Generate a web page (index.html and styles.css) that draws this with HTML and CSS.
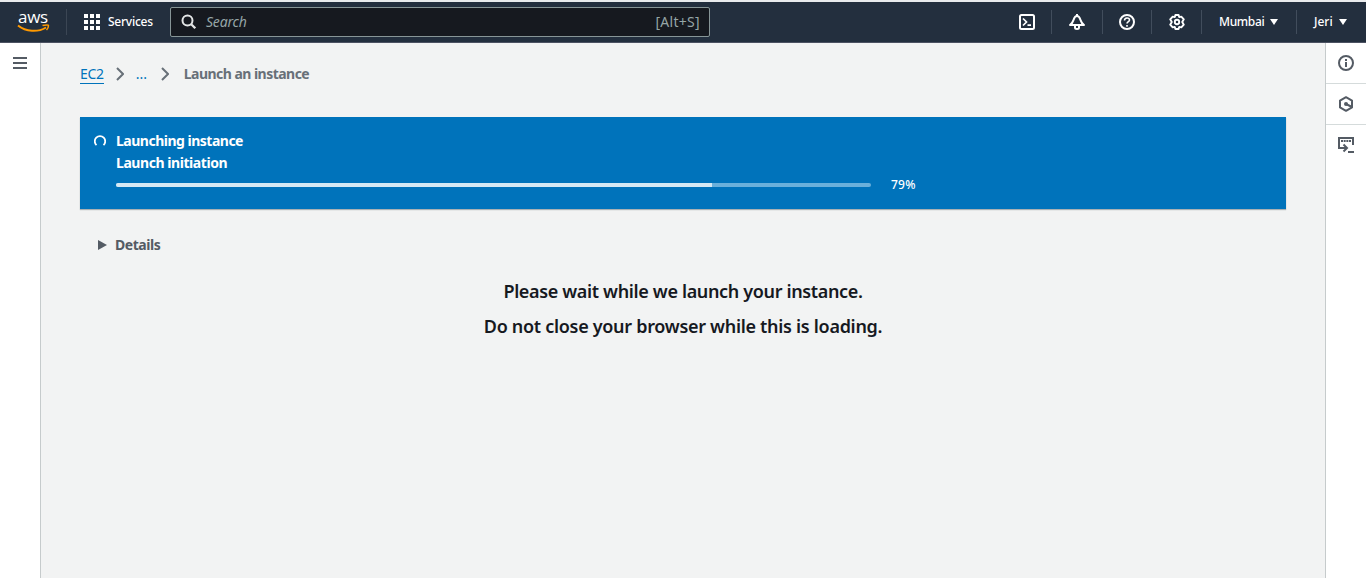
FILE: index.html
```html
<!DOCTYPE html>
<html lang="en">
<head>
<meta charset="utf-8">
<title>Launch an instance | EC2</title>
<link rel="stylesheet" href="styles.css">
</head>
<body>
<header class="topnav">
  <a class="logo"><span class="logo-text">aws</span>
    <svg class="smile" width="33" height="9" viewBox="0 0 33 9" fill="none" stroke="#ff9900"><path d="M1 1.500C9 8 21 8.500 29 3.500" stroke-width="2"/><path d="M25.500 1.500C29 .6 31.500.8 31.500 1.500S31 4.500 29.500 6" stroke-width="1.500"/></svg>
  </a>
  <a class="services">
    <svg width="16" height="16" viewBox="0 0 16 16" fill="#fff"><path d="M0 0h4v4H0zM6 0h4v4H6zM12 0h4v4h-4zM0 6h4v4H0zM6 6h4v4H6zM12 6h4v4h-4zM0 12h4v4H0zM6 12h4v4H6zM12 12h4v4h-4z"/></svg>
    <span class="services-label">Services</span>
  </a>
  <div class="search">
    <svg width="16" height="16" viewBox="0 0 16 16" fill="none" stroke="#e4e6e6" stroke-width="2"><circle cx="6.500" cy="6.500" r="5"/><path d="M10.200 10.200L14.300 14.300" stroke-width="2.300"/></svg>
    <span class="search-label">Search</span><span class="shortcut">[Alt+S]</span>
  </div>
  <nav class="utilities">
    <a class="utility shell"><svg width="16" height="16" viewBox="0 0 16 16" fill="none" stroke="#fff" stroke-width="2"><rect x="1" y="1" width="14" height="14" rx="1.500"/><path d="M4 4.500L7.500 8 4 11.500M8.500 11.200H12" stroke-width="1.700"/></svg></a>
    <a class="utility bell"><svg width="16" height="16" viewBox="0 0 16 16" fill="none" stroke="#fff" stroke-width="2"><path d="M8 0V2M1 11H15C12.500 9.300 12.200 8.200 11.500 6 10.700 3.200 9.800 2 8 2S5.300 3.200 4.500 6C3.800 8.200 3.500 9.300 1 11Z" stroke-linejoin="round"/><path d="M6 11.500V13.500Q6 15 8 15T10 13.500V11.500"/></svg></a>
    <a class="utility help"><svg width="16" height="16" viewBox="0 0 16 16" fill="none" stroke="#fff" stroke-width="2"><circle cx="8" cy="8" r="7"/><path d="M5.500 6.500C5.500 3.200 10.500 3.200 10.500 6 10.500 7.700 8 7.500 8 9.500M8 11V12.700" stroke-width="1.600"/></svg></a>
    <a class="utility gear"><svg width="16" height="16" viewBox="0 0 16 16" fill="none" stroke="#fff" stroke-width="1.900" stroke-linejoin="round"><path d="M6.400 1H9.600L10.200 3.100 12.300 2.600 14.800 5.300 13.200 8 14.800 10.700 12.300 13.400 10.200 12.900 9.600 15H6.400L5.800 12.900 3.700 13.400 1.200 10.700 2.800 8 1.200 5.300 3.700 2.600 5.800 3.100Z"/><circle cx="8" cy="8" r="2.200"/></svg></a>
    <a class="utility region"><span class="region-label">Mumbai</span><i class="caret"></i></a>
    <a class="utility account"><span class="account-label">Jeri</span><i class="caret"></i></a>
  </nav>
</header>
<div class="shell-layout">
  <aside class="left-rail"><svg width="14" height="12" viewBox="0 0 14 12" fill="#545b64"><path d="M0 0h14v2H0zM0 5h14v2H0zM0 10h14v2H0z"/></svg></aside>
  <main class="content">
    <nav class="breadcrumbs">
      <a class="crumb-link">EC2</a>
      <svg class="sep" width="8" height="14" viewBox="0 0 8 14"><path d="M1 1L7 7 1 13"/></svg>
      <a class="crumb-more">...</a>
      <svg class="sep" width="8" height="14" viewBox="0 0 8 14"><path d="M1 1L7 7 1 13"/></svg>
      <span class="crumb-current">Launch an instance</span>
    </nav>
    <section class="flash">
      <svg class="spinner" width="12" height="12" viewBox="0 0 12 12"><path d="M2.500 10.100A5.200 5.200 0 1 1 9.500 10.100"/></svg>
      <div class="flash-body">
        <div class="flash-line launching">Launching instance</div>
        <div class="flash-line initiation">Launch initiation</div>
        <div class="progress-row"><div class="track"><div class="fill" style="width:79%"></div></div><span class="percent">79%</span></div>
      </div>
    </section>
    <div class="details"><svg width="9" height="10" viewBox="0 0 9 10" fill="#545b64"><path d="M0 0L9 5 0 10Z"/></svg><span class="details-label">Details</span></div>
    <div class="wait"><h2 class="wait-first">Please wait while we launch your instance.</h2><h2 class="wait-second">Do not close your browser while this is loading.</h2></div>
  </main>
  <aside class="right-rail">
    <a class="tool"><svg width="16" height="16" viewBox="0 0 16 16" fill="none" stroke="#545b64" stroke-width="2"><circle cx="8" cy="8" r="7"/><path d="M8 4V6M8 7V12"/></svg></a>
    <a class="tool"><svg width="16" height="16" viewBox="0 0 16 16" fill="none" stroke="#545b64" stroke-width="2"><path d="M8 1.200L14 4.600V11.400L8 14.800 2 11.400V4.600Z" stroke-linejoin="round"/><circle cx="8" cy="8" r="2" fill="#545b64" stroke="none"/><path d="M8 8L14 11"/></svg></a>
    <a class="tool last"><svg width="16" height="16" viewBox="0 0 16 16" fill="none" stroke="#545b64" stroke-width="2"><path d="M4 11H1V1H15V8M10 15H16M4 11H9M5.500 7.500L9 11 5.500 14.500"/><path d="M3 4H13" stroke-dasharray="2 .67"/></svg></a>
  </aside>
</div>
</body>
</html>
```
FILE: styles.css
```css
* { box-sizing: border-box; }
body { margin: 0; height: 578px; overflow: hidden; display: flex; flex-direction: column; background: #f2f3f3; font-family: "Noto Sans", "Open Sans", sans-serif; font-size: 14px; line-height: 22px; }
svg { display: block; flex: none; }
span, a { white-space: nowrap; }
.topnav { height: 43px; flex: none; display: flex; align-items: center; background: #232f3e; border-top: 2px solid #e9ebed; border-bottom: 1px solid #4c5262; color: #fff; font-size: 12px; }
.logo { width: 67px; height: 26px; padding: 1px 0 0 17px; border-right: 1px solid #3b4654; }
.logo-text { display: block; height: 14px; margin-left: 1px; font: 500 17px/13px "Open Sans", sans-serif; letter-spacing: -.3px; }
.smile { margin-top: 0; }
.services { width: 103px; padding-left: 17px; display: flex; align-items: center; gap: 8px; font-weight: 500; }
.services-label { letter-spacing: -.25px; }
.search { width: 540px; height: 30px; padding: 0 9px 0 10px; display: flex; align-items: center; border: 1px solid #879596; border-radius: 2px; background: #16191f; color: #95a5a6; font-size: 14px; }
.search-label { margin-left: 9px; font-style: italic; letter-spacing: -.2px; }
.shortcut { margin-left: auto; letter-spacing: .3px; }
.utilities { margin-left: auto; height: 24px; display: flex; }
.utility { display: flex; align-items: center; justify-content: center; border-left: 1px solid #414d5c; font-weight: 500; }
.shell { width: 49px; border-left: 0; }
.bell { width: 51px; }
.help { width: 49px; }
.gear { width: 50px; }
.region { width: 95px; gap: 6px; justify-content: flex-start; padding-left: 17px; }
.account { width: 70px; gap: 6px; justify-content: flex-start; padding-left: 17px; }
.caret { border: 4px solid transparent; border-top: 6px solid #fff; border-bottom: 0; }
.region-label { letter-spacing: -.35px; }
.account-label { letter-spacing: 0; }
.shell-layout { flex: 1; display: flex; }
.left-rail { width: 41px; padding: 14px 13px; background: #fff; border-right: 1px solid #c6cbcc; }
.content { flex: 1; padding: 20px 39px; }
.breadcrumbs { display: flex; align-items: center; height: 22px; gap: 12px; color: #687078; }
.crumb-link { height: 21px; margin-bottom: 2px; line-height: 22px; color: #0073bb; border-bottom: 1px solid #0073bb; letter-spacing: -.3px; }
.sep { fill: none; stroke: #687078; stroke-width: 2; }
.crumb-more { color: #0073bb; width: 13px; }
.crumb-current { margin-left: 3px; font-weight: 700; letter-spacing: -.53px; }
.flash { height: 92px; margin-top: 32px; padding: 13px 14px; display: flex; gap: 10px; background: #0073bb; color: #fff; box-shadow: 0 1px 1px rgba(0,28,36,.3); }
.spinner { margin-top: 5px; fill: none; stroke: #fff; stroke-width: 1.8; }
.flash-body { flex: 1; }
.flash-line { font-weight: 700; white-space: nowrap; }
.launching { letter-spacing: -.5px; }
.initiation { letter-spacing: -.44px; }
.progress-row { height: 22px; display: flex; align-items: center; gap: 20px; font-size: 12px; }
.track { width: 755px; height: 4px; border-radius: 4px; overflow: hidden; background: #6ab0db; }
.fill { height: 4px; background: #d5e9f5; }
.percent { font-weight: 500; letter-spacing: .2px; }
.details { margin: 25px 0 0 18px; height: 22px; display: flex; align-items: center; gap: 8px; color: #545b64; font-weight: 700; }
.details-label { letter-spacing: -.45px; }
.wait { margin-top: 18px; text-align: center; color: #16191f; }
.wait h2 { margin: 0; font-size: 18px; line-height: 35px; font-weight: 600; }
.wait-first { letter-spacing: -.35px; }
.wait-second { letter-spacing: -.3px; }
.right-rail { width: 41px; background: #fff; border-left: 1px solid #c6cbcc; }
.tool { height: 41px; display: flex; align-items: center; justify-content: center; border-bottom: 1px solid #d5dbdb; }
.last { height: 40px; border: 0; }
```
